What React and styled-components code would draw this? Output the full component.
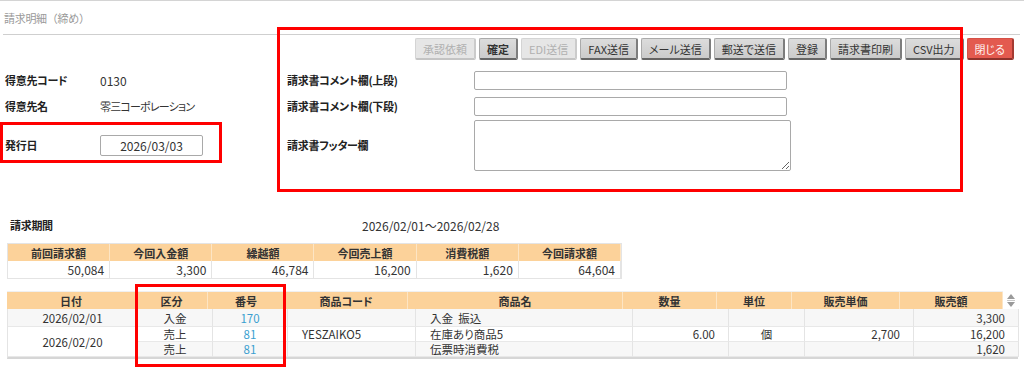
import React from 'react';
import styled, { createGlobalStyle } from 'styled-components';

const GlobalStyle = createGlobalStyle`
  body {
    margin: 0;
    background: #fff;
    color: #333;
    font-family: "Noto Sans CJK JP", "Noto Sans", sans-serif;
    font-feature-settings: "palt";
  }
  * { box-sizing: border-box; }
`;

const Page = styled.div`
  position: relative;
  width: 1024px;
  height: 385px;
  overflow: hidden;
  border-top: 1px solid #d4d4d4;
`;

const TitleBar = styled.div`
  height: 34px;
  margin: 0 4px 0 3px;
  padding-left: 1px;
  display: flex;
  align-items: center;
  border-bottom: 1px solid #cfcfcf;
  font-size: 11px;
  font-feature-settings: normal;
  letter-spacing: -0.3px;
  color: #9a9a9a;
`;

const TopSection = styled.div`
  display: flex;
  height: 136px;
`;

const LeftCol = styled.div`
  width: 282px;
  padding: 32px 0 0 5px;
  display: flex;
  flex-direction: column;
`;

const RightCol = styled.div`
  flex: 1;
  padding: 3px 10px 0 5px;
  display: flex;
  flex-direction: column;
`;

const ButtonBar = styled.div`
  display: flex;
  justify-content: flex-end;
  gap: 3px;
  height: 22px;
  margin-bottom: 7px;
`;

const Button = styled.button`
  height: 22px;
  padding: 0 7px;
  font-family: inherit;
  font-feature-settings: "palt";
  font-size: 11px;
  font-weight: ${p => (p.$bold ? 'bold' : 'normal')};
  color: #333;
  background: linear-gradient(#dcdcdc, #cbcbcb);
  border: 1px solid #aaa;
  border-right: 2px solid #7d7d7d;
  border-bottom: 2px solid #666;
  border-radius: 2px;
  cursor: pointer;

  &:disabled {
    color: #b0b0b0;
    background: #e6e6e6;
    border-color: #d4d4d4;
    border-bottom-color: #c4c4c4;
    border-right-color: #cbcbcb;
  }
`;

const CloseButton = styled(Button)`
  color: #fff4f2;
  background: #e35a4f;
  border-color: #d45046;
  border-right-color: #a53a32;
  border-bottom-color: #8f322b;
`;

const FieldRow = styled.div`
  display: flex;
  align-items: center;
  height: ${p => p.$h || 26}px;
`;

const Label = styled.div`
  width: ${p => p.$w}px;
  flex-shrink: 0;
  font-size: 11px;
  font-weight: bold;
  letter-spacing: -0.3px;
  color: #222;
`;

const Value = styled.div`
  font-size: ${p => (p.$kana ? 11 : 12)}px;
  letter-spacing: ${p => (p.$kana ? '-0.8px' : 'normal')};
  color: #333;
`;

const DateBox = styled.input`
  width: 103px;
  height: 21px;
  padding: 0;
  border: 1px solid #a9a9a9;
  border-radius: 2px;
  text-align: center;
  font-family: inherit;
  font-size: 12px;
  color: #333;
`;

const TextInput = styled.input`
  width: 313px;
  height: 19px;
  border: 1px solid #a9a9a9;
  border-radius: 2px;
  font-family: inherit;
  font-size: 12px;
`;

const FooterArea = styled.textarea`
  width: 317px;
  height: 51px;
  border: 1px solid #a9a9a9;
  border-radius: 2px;
  font-family: inherit;
  font-size: 12px;
`;

const PeriodRow = styled.div`
  display: flex;
  align-items: center;
  height: 20px;
  margin-top: 44px;
  padding-left: 10px;
`;

const SummaryTable = styled.div`
  display: grid;
  grid-template-columns: repeat(6, 1fr);
  width: 615px;
  margin: 8px 0 0 7px;
  border: 1px solid #e4e4e4;
`;

const SumHead = styled.div`
  height: 17px;
  display: flex;
  align-items: center;
  justify-content: center;
  background: #fcd29a;
  border-right: 1px solid #fde5c4;
  font-size: 11px;
  font-weight: bold;
  color: #333;
`;

const SumCell = styled.div`
  height: 17px;
  display: flex;
  align-items: center;
  justify-content: flex-end;
  padding-right: 5px;
  border-right: 1px solid #e4e4e4;
  font-size: 12px;
`;

const DetailWrap = styled.div`
  width: 1011px;
  margin: 12px 0 0 7px;
`;

const DetailHead = styled.div`
  display: flex;
  align-items: flex-start;
`;

const HeadGrid = styled.div`
  display: grid;
  grid-template-columns: 129px 72px 77px 123px 215px 94px 75px 108px 103px;
  height: 18px;
  background: #fcd29a;
  border-top: 1px solid #f0f0f0;
`;

const HeadCell = styled.div`
  display: flex;
  align-items: center;
  justify-content: center;
  border-right: 1px solid #fde5c4;
  font-size: 11px;
  font-weight: bold;
  color: #333;
`;

const ScrollArrows = styled.div`
  width: 15px;
  display: flex;
  justify-content: center;
  padding-top: 2px;
`;

const BodyGrid = styled.div`
  display: grid;
  grid-template-columns: 130px 75px 75px 128px 217px 96px 76px 109px 105px;
  grid-template-rows: 18px 15px 15px;
  border-left: 1px solid #e4e4e4;
  border-bottom: 2px solid #d6d6d6;
`;

const Cell = styled.div`
  display: flex;
  align-items: center;
  justify-content: ${p => (p.$align === 'right' ? 'flex-end' : p.$align === 'left' ? 'flex-start' : 'center')};
  padding: ${p => (p.$align === 'right' ? '0 13px 0 0' : p.$align === 'left' ? '0 0 0 14px' : '0')};
  grid-row: ${p => (p.$span ? `span ${p.$span}` : 'auto')};
  background: ${p => (p.$shade ? '#f7f7f7' : '#fff')};
  border-right: 1px solid #e4e4e4;
  border-bottom: 1px solid #e8e8e8;
  font-size: 11.5px;
  line-height: 14px;
  color: ${p => (p.$link ? '#3a9fd0' : '#333')};
  white-space: nowrap;
`;

const Mark = styled.div`
  position: absolute;
  left: ${p => p.$x}px;
  top: ${p => p.$y}px;
  width: ${p => p.$w}px;
  height: ${p => p.$h}px;
  border: 3px solid #ff0000;
  pointer-events: none;
`;

const summary = [
  ['前回請求額', '50,084'],
  ['今回入金額', '3,300'],
  ['繰越額', '46,784'],
  ['今回売上額', '16,200'],
  ['消費税額', '1,620'],
  ['今回請求額', '64,604'],
];

const heads = ['日付', '区分', '番号', '商品コード', '商品名', '数量', '単位', '販売単価', '販売額'];

export default function App() {
  return (
    <Page>
      <GlobalStyle />
      <TitleBar>請求明細（締め）</TitleBar>

      <TopSection>
        <LeftCol>
          <FieldRow>
            <Label $w={95}>得意先コード</Label>
            <Value>0130</Value>
          </FieldRow>
          <FieldRow>
            <Label $w={95}>得意先名</Label>
            <Value $kana>零三コーポレーション</Value>
          </FieldRow>
          <FieldRow $h={52}>
            <Label $w={95}>発行日</Label>
            <DateBox readOnly value="2026/03/03" />
          </FieldRow>
        </LeftCol>

        <RightCol>
          <ButtonBar>
            <Button disabled>承認依頼</Button>
            <Button $bold>確定</Button>
            <Button disabled>EDI送信</Button>
            <Button>FAX送信</Button>
            <Button>メール送信</Button>
            <Button>郵送で送信</Button>
            <Button>登録</Button>
            <Button>請求書印刷</Button>
            <Button>CSV出力</Button>
            <CloseButton>閉じる</CloseButton>
          </ButtonBar>
          <FieldRow>
            <Label $w={187}>請求書コメント欄(上段)</Label>
            <TextInput />
          </FieldRow>
          <FieldRow>
            <Label $w={187}>請求書コメント欄(下段)</Label>
            <TextInput />
          </FieldRow>
          <FieldRow $h={52}>
            <Label $w={187}>請求書フッター欄</Label>
            <FooterArea />
          </FieldRow>
        </RightCol>
      </TopSection>

      <PeriodRow>
        <Label $w={352}>請求期間</Label>
        <Value>2026/02/01～2026/02/28</Value>
      </PeriodRow>

      <SummaryTable>
        {summary.map(([h]) => <SumHead key={h}>{h}</SumHead>)}
        {summary.map(([h, v]) => <SumCell key={h + v}>{v}</SumCell>)}
      </SummaryTable>

      <DetailWrap>
        <DetailHead>
          <HeadGrid>
            {heads.map(h => <HeadCell key={h}>{h}</HeadCell>)}
          </HeadGrid>
          <ScrollArrows>
            <svg width="10" height="15" viewBox="0 0 10 15">
              <polygon points="1,6 5,1 9,6" fill="#9a9a9a" />
              <rect x="1" y="7" width="8" height="1" fill="#c8c8c8" />
              <polygon points="1,9 9,9 5,14" fill="#9a9a9a" />
            </svg>
          </ScrollArrows>
        </DetailHead>
        <BodyGrid>
          <Cell $shade>2026/02/01</Cell>
          <Cell $shade>入金</Cell>
          <Cell $shade $link>170</Cell>
          <Cell $shade $align="left"></Cell>
          <Cell $shade $align="left">入金&nbsp;&nbsp;振込</Cell>
          <Cell $shade $align="right"></Cell>
          <Cell $shade></Cell>
          <Cell $shade $align="right"></Cell>
          <Cell $shade $align="right">3,300</Cell>

          <Cell $span={2}>2026/02/20</Cell>
          <Cell>売上</Cell>
          <Cell $link>81</Cell>
          <Cell $align="left">YESZAIKO5</Cell>
          <Cell $align="left">在庫あり商品5</Cell>
          <Cell $align="right">6.00</Cell>
          <Cell>個</Cell>
          <Cell $align="right">2,700</Cell>
          <Cell $align="right">16,200</Cell>

          <Cell $shade>売上</Cell>
          <Cell $shade $link>81</Cell>
          <Cell $shade $align="left"></Cell>
          <Cell $shade $align="left">伝票時消費税</Cell>
          <Cell $shade></Cell>
          <Cell $shade></Cell>
          <Cell $shade></Cell>
          <Cell $shade $align="right">1,620</Cell>
        </BodyGrid>
      </DetailWrap>

      <Mark $x={277} $y={26} $w={686} $h={165} />
      <Mark $x={0} $y={121} $w={222} $h={41} />
      <Mark $x={135} $y={283} $w={151} $h={83} />
    </Page>
  );
}
